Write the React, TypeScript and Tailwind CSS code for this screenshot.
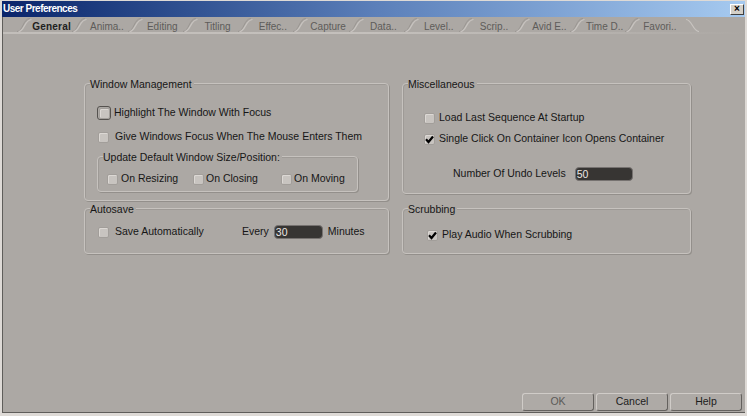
import React from "react";

const font = { fontFamily: '"Liberation Sans", Arial, sans-serif' };

function Box({ checked = false, focus = false }: { checked?: boolean; focus?: boolean }) {
  const inner = (
    <div className="w-[11px] h-[11px] rounded-[2px] bg-[#c8c4c0] border border-[#a29e9a] shadow-[inset_1px_1px_0_#dcd8d4] flex items-center justify-center">
      {checked && (
        <svg width="9" height="9" viewBox="0 0 9 9">
          <path d="M1 4.3 L3.5 7 L8 1.5" stroke="#000" strokeWidth="2.2" fill="none" />
        </svg>
      )}
    </div>
  );
  if (focus)
    return (
      <div className="w-[14px] h-[14px] rounded-[3px] border border-[#55524f] flex items-center justify-center">
        {inner}
      </div>
    );
  return inner;
}

function Row({ children, className = "" }: { children: React.ReactNode; className?: string }) {
  return <div className={"flex items-center h-[14px] text-[10.5px] text-[#161616] " + className}>{children}</div>;
}

function Group({
  title,
  className = "",
  children,
}: {
  title: string;
  className?: string;
  children: React.ReactNode;
}) {
  return (
    <div
      className={
        "relative rounded-[4px] border border-[#c6c2be] shadow-[1px_1px_0_#938f8b,inset_1px_1px_0_#9e9a96] " +
        className
      }
    >
      <span className="absolute -top-[6px] left-[5px] bg-[#aca8a4] pr-[2px] text-[10.5px] leading-[12px] text-[#161616]">
        {title}
      </span>
      {children}
    </div>
  );
}

function Field({ value, w }: { value: string; w: string }) {
  return (
    <div
      className={
        "h-[14px] rounded-[4px] bg-[#373533] border border-[#767270] text-[10.5px] leading-[12px] text-[#ece8e4] pl-[1px] " +
        w
      }
    >
      {value}
    </div>
  );
}

const tabs = [
  "General",
  "Anima..",
  "Editing",
  "Titling",
  "Effec..",
  "Capture",
  "Data..",
  "Level..",
  "Scrip..",
  "Avid E..",
  "Time D..",
  "Favori..",
];

function Btn({ label, dim = false }: { label: string; dim?: boolean }) {
  return (
    <div
      className={
        "w-[72px] h-[18px] rounded-[3px] bg-[#aeaaa6] border border-[#d0ccc8] border-r-[#64615e] border-b-[#64615e] flex items-center justify-center text-[10.5px] " +
        (dim ? "text-[#5c5a58]" : "text-[#1c1c1c]")
      }
    >
      {label}
    </div>
  );
}

export default function App() {
  return (
    <div style={font} className="w-[747px] h-[416px] bg-[#aca8a4] border-t border-l-2 border-r-2 border-b-[3px] border-[#dedad6] flex flex-col overflow-hidden">
      {/* title bar */}
      <div className="h-[16px] bg-gradient-to-r from-[#0a246a] via-[#5b7fb9] to-[#a6caf0] flex items-center justify-between pl-[1px] pr-[1px]">
        <span className="text-white font-bold text-[10px] leading-[12px] tracking-[-0.5px]">User Preferences</span>
        <div className="w-[14px] h-[11px] bg-[#d4d0c8] border border-t-white border-l-white border-[#404040] flex items-center justify-center text-[10px] leading-[10px] font-bold text-black">
          ×
        </div>
      </div>
      {/* inner frame */}
      <div className="flex-1 flex flex-col border-l border-b border-[#5f5d5a]">
        {/* tabs */}
        <div className="h-[15px] flex pl-[21px] relative">
          {tabs.map((t, i) => (
            <div key={t} className="relative w-[55.3px] h-[15px] flex items-center justify-center">
              <svg className="absolute left-[-7px] top-0" width="16" height="15" viewBox="0 0 16 15">
                <path d="M0 14.5 C6 14.5 6 1.5 13 1.5" stroke="#9a9692" strokeWidth="1" fill="none" />
                <path d="M1.5 14.5 C7.5 14.5 7.5 2.5 14.5 2.5" stroke="#c8c4c0" strokeWidth="1.2" fill="none" />
              </svg>
              <span
                className={
                  "text-[10px] leading-[12px] mt-[4px] " +
                  (i === 0 ? "font-bold text-[#202020] tracking-[0.2px]" : "text-[#5e5c5a]")
                }
              >
                {t}
              </span>
            </div>
          ))}
          <svg className="absolute left-[683px] top-0" width="16" height="15" viewBox="0 0 16 15">
            <path d="M0 2.5 C6 2.5 7 14.5 13 14.5" stroke="#c8c4c0" strokeWidth="1.2" fill="none" />
          </svg>
        </div>
        <div className="h-[2px] bg-gradient-to-r from-[#c2beba] via-[#c4c0bc] to-[#aca8a4]" />

        {/* content */}
        <div className="flex-1 flex flex-col">
          <div className="flex pl-[81px] pt-[49px] gap-[13px]">
            {/* left column */}
            <div className="w-[305px] flex flex-col gap-[7px]">
              <Group title="Window Management" className="h-[118px] pt-[22px] pl-[12px]">
                <Row>
                  <Box focus />
                  <span className="ml-[3px]">Highlight The Window With Focus</span>
                </Row>
                <Row className="mt-[10px] pl-[1px]">
                  <Box />
                  <span className="ml-[6px]">Give Windows Focus When The Mouse Enters Them</span>
                </Row>
                <Group title="Update Default Window Size/Position:" className="mt-[12px] w-[261px] h-[36px] pt-[15px] pl-[9px]">
                  <Row>
                    <div className="w-[86px] flex items-center">
                      <Box />
                      <span className="ml-[3px]">On Resizing</span>
                    </div>
                    <div className="w-[88px] flex items-center">
                      <Box />
                      <span className="ml-[2px]">On Closing</span>
                    </div>
                    <div className="flex items-center">
                      <Box />
                      <span className="ml-[2px]">On Moving</span>
                    </div>
                  </Row>
                </Group>
              </Group>
              <Group title="Autosave" className="h-[46px] pt-[16px] pl-[13px]">
                <Row>
                  <div className="w-[144px] flex items-center">
                    <Box />
                    <span className="ml-[6px]">Save Automatically</span>
                  </div>
                  <span>Every</span>
                  <div className="ml-[5px]">
                    <Field value="30" w="w-[49px]" />
                  </div>
                  <span className="ml-[5px]">Minutes</span>
                </Row>
              </Group>
            </div>
            {/* right column */}
            <div className="w-[289px] flex flex-col gap-[14px]">
              <Group title="Miscellaneous" className="h-[111px] pt-[27px] pl-[21px]">
                <Row>
                  <Box />
                  <span className="ml-[4px]">Load Last Sequence At Startup</span>
                </Row>
                <Row className="mt-[7px]">
                  <Box checked />
                  <span className="ml-[4px]">Single Click On Container Icon Opens Container</span>
                </Row>
                <Row className="mt-[21px] pl-[29px]">
                  <span>Number Of Undo Levels</span>
                  <div className="ml-[9px]">
                    <Field value="50" w="w-[58px]" />
                  </div>
                </Row>
              </Group>
              <Group title="Scrubbing" className="h-[46px] pt-[19px] pl-[24px]">
                <Row>
                  <Box checked />
                  <span className="ml-[4px]">Play Audio When Scrubbing</span>
                </Row>
              </Group>
            </div>
          </div>
          <div className="mt-auto flex justify-end gap-[2px] pr-[3px] pb-[1px]">
            <Btn label="OK" dim />
            <Btn label="Cancel" />
            <Btn label="Help" />
          </div>
        </div>
      </div>
    </div>
  );
}
